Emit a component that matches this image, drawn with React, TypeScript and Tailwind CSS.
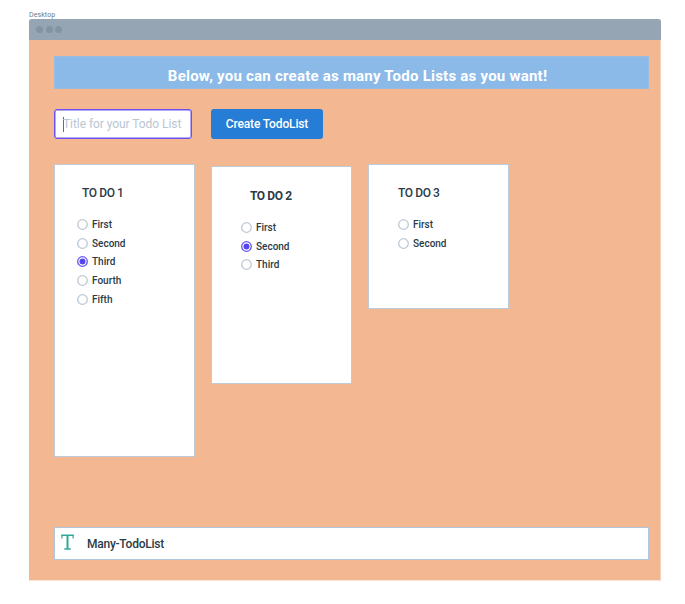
type TodoCard = {
  title: string;
  items: string[];
  selected?: string;
  card: string;
  heading: string;
  list: string;
};

const cards: TodoCard[] = [
  {
    title: "TO DO 1",
    items: ["First", "Second", "Third", "Fourth", "Fifth"],
    selected: "Third",
    card: "h-[293px] pt-[20px]",
    heading: "ml-[27px] font-medium tracking-[-0.4px]",
    list: "ml-[22px]",
  },
  {
    title: "TO DO 2",
    items: ["First", "Second", "Third"],
    selected: "Second",
    card: "mt-[2px] h-[218px] pt-[21px]",
    heading: "ml-[38px] font-bold tracking-[-0.4px]",
    list: "ml-[29px]",
  },
  {
    title: "TO DO 3",
    items: ["First", "Second"],
    card: "h-[145px] pt-[20px]",
    heading: "ml-[29px] font-medium tracking-[-0.4px]",
    list: "ml-[29px]",
  },
];

function Radio({ label, checked }: { label: string; checked: boolean }) {
  return (
    <li className="flex h-[18.75px] items-center gap-[4px]">
      <svg width="11" height="11" viewBox="0 0 11 11" className="shrink-0">
        <circle cx="5.5" cy="5.5" r="4.8" fill="#fff" stroke={checked ? "#6455ee" : "#bcc9d6"} strokeWidth="1.3" />
        {checked && <circle cx="5.5" cy="5.5" r="3" fill="#5546ec" />}
      </svg>
      <span className="mt-[1px] text-[10px] leading-[12px] font-medium">{label}</span>
    </li>
  );
}

export default function App() {
  return (
    <div className="h-[604px] w-[685px] overflow-hidden bg-white pt-[10px] pl-[29px] font-['Roboto','Liberation_Sans',sans-serif] text-[#2b3b47]">
      <div className="h-[9px] text-[7px] leading-[10px] tracking-[0.1px] text-[#6d7b87]">Desktop</div>
      <div className="h-[561px] w-[632px] overflow-hidden rounded-t-[3px] bg-[#f3b892] shadow-[0_1px_1px_#fae3d5]">
        <header className="flex h-[21px] items-center gap-[2.5px] bg-[#95a5b3] pl-[7px]">
          <span className="size-[7px] rounded-full bg-[#8293a2]" />
          <span className="size-[7px] rounded-full bg-[#8293a2]" />
          <span className="size-[7px] rounded-full bg-[#8293a2]" />
        </header>
        <main className="flex h-[540px] flex-col border-r border-[#f8d3ba] pt-[16px] pl-[25px]">
          <h1 className="h-[33px] w-[595px] border border-[#9bbbdd] bg-[#8bbae9] pt-[9px] pl-[12px] text-center text-[15px] leading-[20px] font-bold tracking-[0.23px] whitespace-nowrap text-white">
            Below, you can create as many Todo Lists as you want!
          </h1>
          <div className="mt-[20px] flex gap-[19px]">
            <div className="flex h-[30px] w-[138px] items-center rounded-[3px] border border-[#6a50f0] bg-white pl-[8px] shadow-[inset_0_0_0_0.5px_#6a50f0]">
              <span className="h-[15px] w-px bg-[#5f6e7b]" />
              <span className="-ml-px text-[12px] tracking-[-0.06px] whitespace-nowrap text-[#b9c6d4]">Title for your Todo List</span>
            </div>
            <button className="h-[30px] w-[112px] rounded-[3px] bg-[#267dd6] text-[12px] font-medium tracking-[-0.15px] whitespace-nowrap text-white">
              Create TodoList
            </button>
          </div>
          <div className="mt-[25px] flex h-[293px] items-start gap-[16px]">
            {cards.map((c) => (
              <section key={c.title} className={`w-[141px] border border-[#bccbd6] bg-white ${c.card}`}>
                <h2 className={`text-[12px] leading-[16px] ${c.heading}`}>{c.title}</h2>
                <ul className={`mt-[14px] ${c.list}`}>
                  {c.items.map((item) => (
                    <Radio key={item} label={item} checked={item === c.selected} />
                  ))}
                </ul>
              </section>
            ))}
          </div>
          <footer className="mt-[70px] flex h-[33px] w-[595px] items-center border border-[#b1c6db] bg-white pl-[6px]">
            <svg width="14" height="16" viewBox="0 0 14 16" className="-mt-[3px]" fill="none" stroke="#2ca999">
              <path d="M.9 4.5V1M12.1 4.5V1" strokeWidth="1.2" />
              <path d="M.3 1.2H12.7M3.3 15H9.7" strokeWidth="1.4" />
              <path d="M6.5 1V15" strokeWidth="2" />
            </svg>
            <span className="mt-[1px] ml-[12px] text-[12px] leading-none font-medium tracking-[-0.25px]">Many-TodoList</span>
          </footer>
        </main>
      </div>
    </div>
  );
}
